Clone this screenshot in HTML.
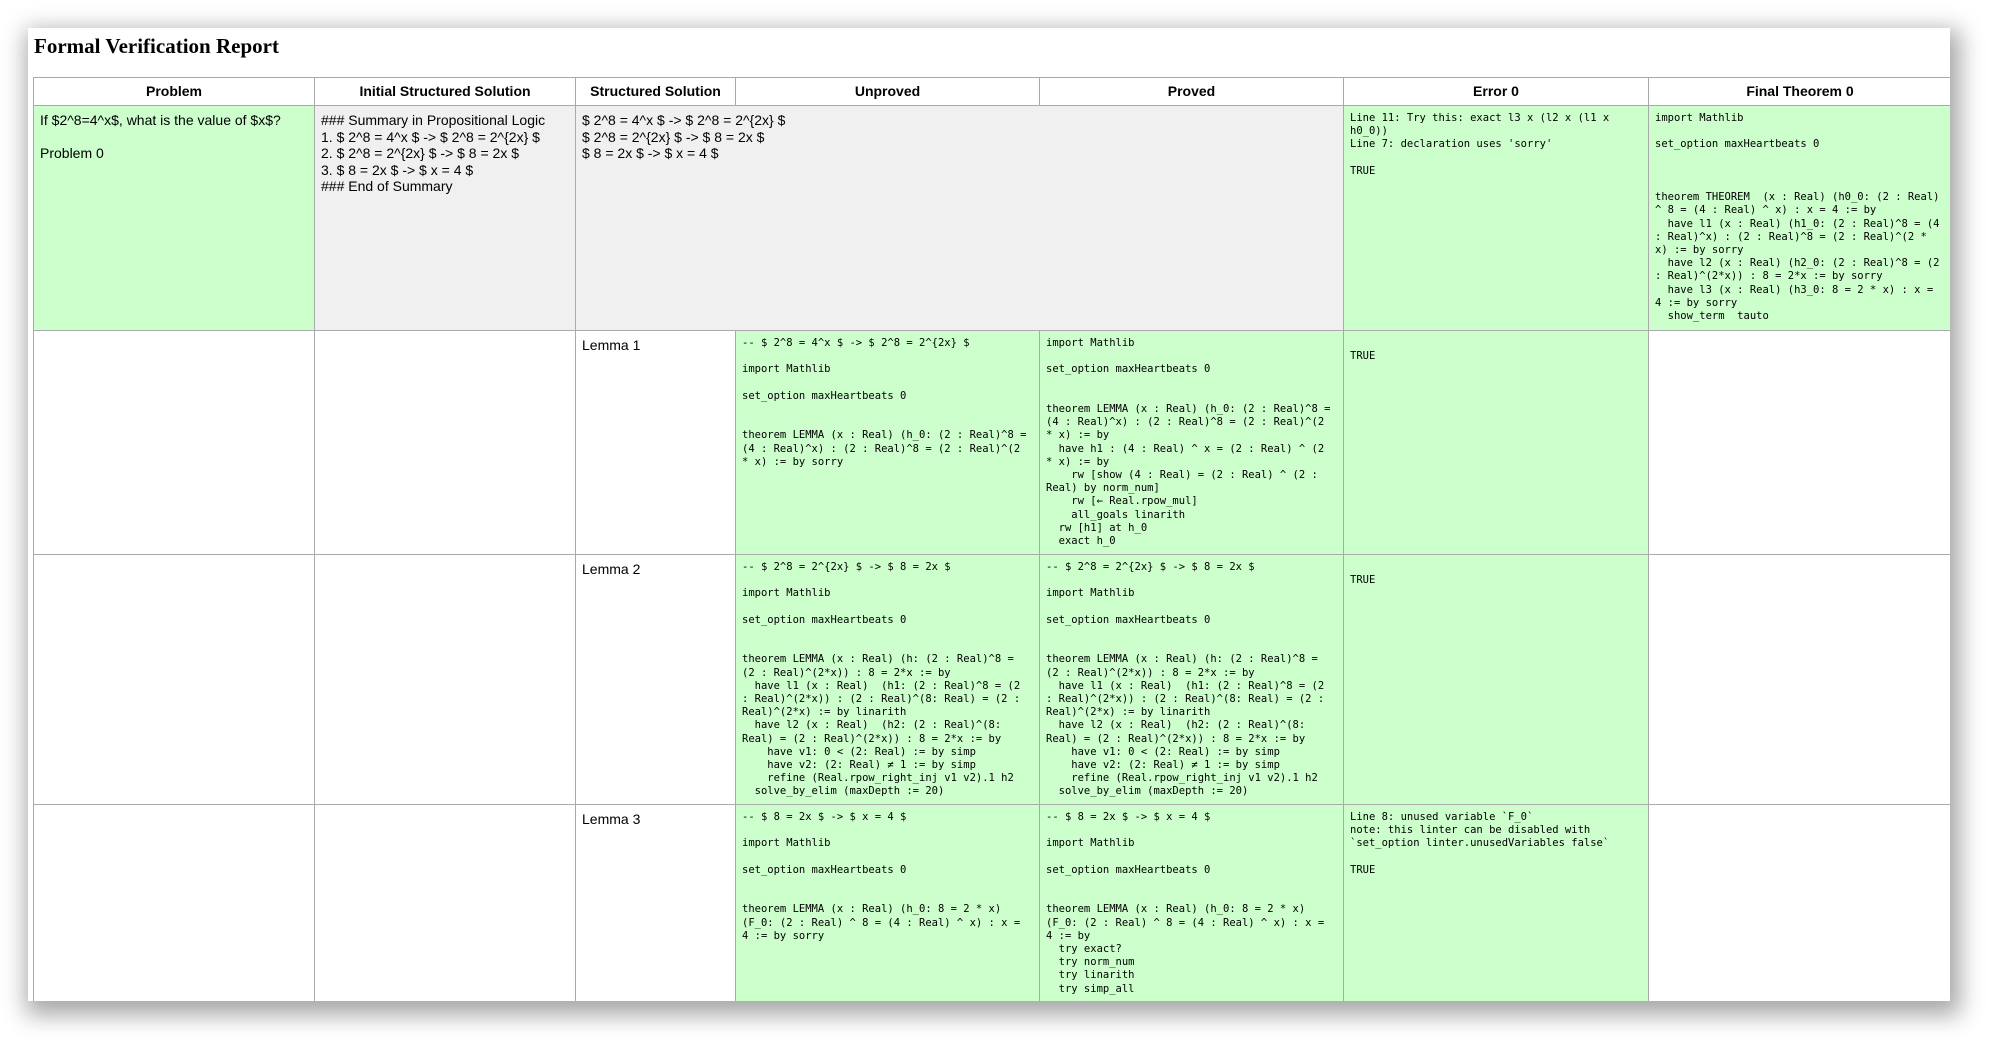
<!DOCTYPE html>
<html><head><meta charset="utf-8"><style>
html,body{margin:0;padding:0;background:#fff;width:2012px;height:1064px;overflow:hidden}
.card{position:absolute;left:28px;top:28px;width:1922px;height:973px;background:#fff;overflow:hidden;box-shadow:4px 8px 22px 6px rgba(0,0,0,0.35)}
h1{position:absolute;left:6px;top:6px;margin:0;font:bold 21px "Liberation Serif",serif;color:#000}
table{position:absolute;left:5px;top:49px;border-collapse:collapse;table-layout:fixed;width:1918px}
td,th{border:1px solid #aaa;vertical-align:top;padding:6px 6px 0 6px;font:14px/16.5px "Liberation Sans",Arial,sans-serif;color:#000;white-space:pre;overflow:hidden}
th{font-weight:bold;text-align:center;vertical-align:middle;padding:0;height:27px}
.g{background:#ccffcc}.s{background:#f0f0f0}
.m{font:10.5px/13.2px "DejaVu Sans Mono","Liberation Mono",monospace}
</style></head><body>
<div class="card">
<h1>Formal Verification Report</h1>
<table>
<colgroup><col style="width:281px"><col style="width:261px"><col style="width:160px"><col style="width:304px"><col style="width:304px"><col style="width:305px"><col style="width:303px"></colgroup>
<tr><th>Problem</th><th>Initial Structured Solution</th><th>Structured Solution</th><th>Unproved</th><th>Proved</th><th>Error 0</th><th>Final Theorem 0</th></tr>
<tr style="height:225px"><td class="g">If $2^8=4^x$, what is the value of $x$?

Problem 0</td><td class="s">### Summary in Propositional Logic
1. $ 2^8 = 4^x $ -&gt; $ 2^8 = 2^{2x} $
2. $ 2^8 = 2^{2x} $ -&gt; $ 8 = 2x $
3. $ 8 = 2x $ -&gt; $ x = 4 $
### End of Summary</td><td class="s" colspan="3">$ 2^8 = 4^x $ -&gt; $ 2^8 = 2^{2x} $
$ 2^8 = 2^{2x} $ -&gt; $ 8 = 2x $
$ 8 = 2x $ -&gt; $ x = 4 $</td><td class="g m">Line 11: Try this: exact l3 x (l2 x (l1 x
h0_0))
Line 7: declaration uses 'sorry'

TRUE</td><td class="g m">import Mathlib

set_option maxHeartbeats 0



theorem THEOREM  (x : Real) (h0_0: (2 : Real)
^ 8 = (4 : Real) ^ x) : x = 4 := by
  have l1 (x : Real) (h1_0: (2 : Real)^8 = (4
: Real)^x) : (2 : Real)^8 = (2 : Real)^(2 *
x) := by sorry
  have l2 (x : Real) (h2_0: (2 : Real)^8 = (2
: Real)^(2*x)) : 8 = 2*x := by sorry
  have l3 (x : Real) (h3_0: 8 = 2 * x) : x =
4 := by sorry
  show_term  tauto</td></tr>
<tr style="height:224px"><td></td><td></td><td>Lemma 1</td><td class="g m">-- $ 2^8 = 4^x $ -&gt; $ 2^8 = 2^{2x} $

import Mathlib

set_option maxHeartbeats 0


theorem LEMMA (x : Real) (h_0: (2 : Real)^8 =
(4 : Real)^x) : (2 : Real)^8 = (2 : Real)^(2
* x) := by sorry</td><td class="g m">import Mathlib

set_option maxHeartbeats 0


theorem LEMMA (x : Real) (h_0: (2 : Real)^8 =
(4 : Real)^x) : (2 : Real)^8 = (2 : Real)^(2
* x) := by
  have h1 : (4 : Real) ^ x = (2 : Real) ^ (2
* x) := by
    rw [show (4 : Real) = (2 : Real) ^ (2 :
Real) by norm_num]
    rw [← Real.rpow_mul]
    all_goals linarith
  rw [h1] at h_0
  exact h_0</td><td class="g m">
TRUE</td><td></td></tr>
<tr style="height:250px"><td></td><td></td><td>Lemma 2</td><td class="g m">-- $ 2^8 = 2^{2x} $ -&gt; $ 8 = 2x $

import Mathlib

set_option maxHeartbeats 0


theorem LEMMA (x : Real) (h: (2 : Real)^8 =
(2 : Real)^(2*x)) : 8 = 2*x := by
  have l1 (x : Real)  (h1: (2 : Real)^8 = (2
: Real)^(2*x)) : (2 : Real)^(8: Real) = (2 :
Real)^(2*x) := by linarith
  have l2 (x : Real)  (h2: (2 : Real)^(8:
Real) = (2 : Real)^(2*x)) : 8 = 2*x := by
    have v1: 0 &lt; (2: Real) := by simp
    have v2: (2: Real) ≠ 1 := by simp
    refine (Real.rpow_right_inj v1 v2).1 h2
  solve_by_elim (maxDepth := 20)</td><td class="g m">-- $ 2^8 = 2^{2x} $ -&gt; $ 8 = 2x $

import Mathlib

set_option maxHeartbeats 0


theorem LEMMA (x : Real) (h: (2 : Real)^8 =
(2 : Real)^(2*x)) : 8 = 2*x := by
  have l1 (x : Real)  (h1: (2 : Real)^8 = (2
: Real)^(2*x)) : (2 : Real)^(8: Real) = (2 :
Real)^(2*x) := by linarith
  have l2 (x : Real)  (h2: (2 : Real)^(8:
Real) = (2 : Real)^(2*x)) : 8 = 2*x := by
    have v1: 0 &lt; (2: Real) := by simp
    have v2: (2: Real) ≠ 1 := by simp
    refine (Real.rpow_right_inj v1 v2).1 h2
  solve_by_elim (maxDepth := 20)</td><td class="g m">
TRUE</td><td></td></tr>
<tr style="height:250px"><td></td><td></td><td>Lemma 3</td><td class="g m">-- $ 8 = 2x $ -&gt; $ x = 4 $

import Mathlib

set_option maxHeartbeats 0


theorem LEMMA (x : Real) (h_0: 8 = 2 * x)
(F_0: (2 : Real) ^ 8 = (4 : Real) ^ x) : x =
4 := by sorry</td><td class="g m">-- $ 8 = 2x $ -&gt; $ x = 4 $

import Mathlib

set_option maxHeartbeats 0


theorem LEMMA (x : Real) (h_0: 8 = 2 * x)
(F_0: (2 : Real) ^ 8 = (4 : Real) ^ x) : x =
4 := by
  try exact?
  try norm_num
  try linarith
  try simp_all</td><td class="g m">Line 8: unused variable `F_0`
note: this linter can be disabled with
`set_option linter.unusedVariables false`

TRUE</td><td></td></tr>
</table>
</div>
</body></html>
